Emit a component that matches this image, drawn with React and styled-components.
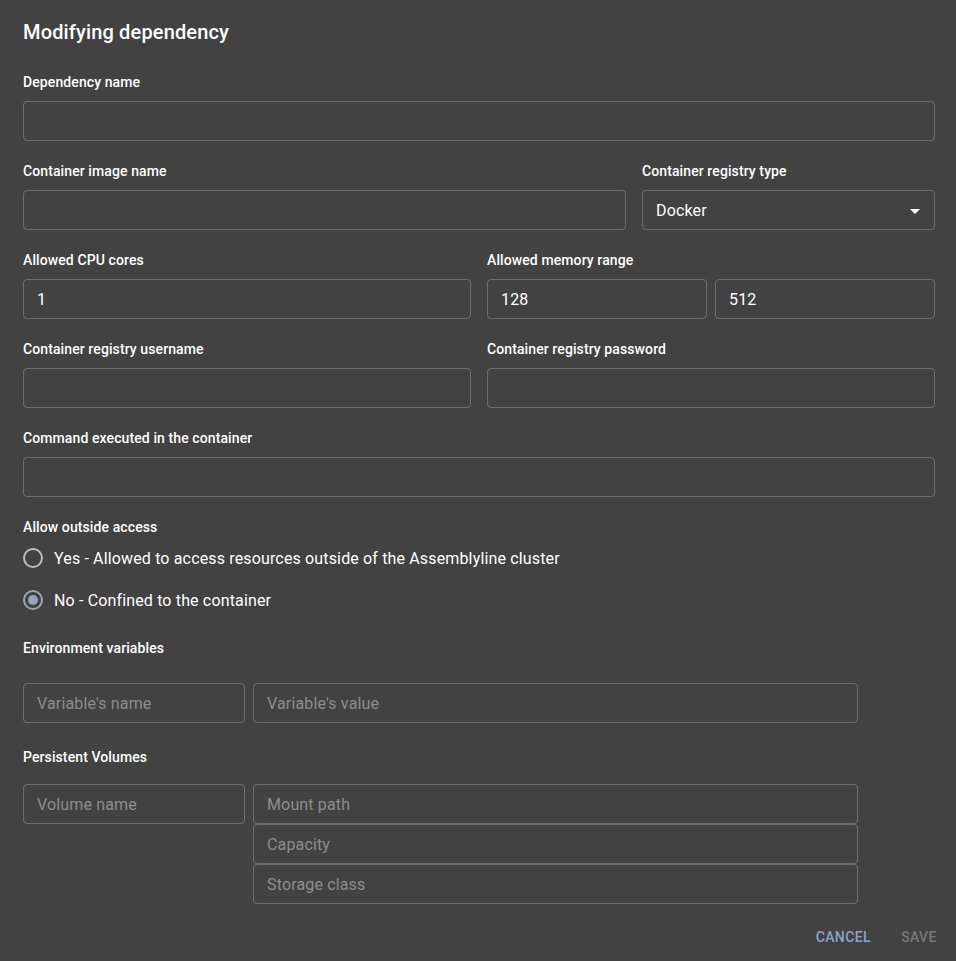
import React from "react";
import styled, { createGlobalStyle } from "styled-components";

const Global = createGlobalStyle`
  html, body { margin: 0; padding: 0; background: #424242; }
  body { font-family: Roboto, "Liberation Sans", Arial, sans-serif; color: #fff; }
  * { box-sizing: border-box; }
`;

const Page = styled.div`
  width: 956px;
  min-height: 961px;
  background: #424242;
  padding: 16px 21px 0 23px;
  display: flex;
  flex-direction: column;
`;

const Title = styled.h2`
  margin: 0;
  font-size: 20px;
  line-height: 32px;
  font-weight: 500;
  letter-spacing: 0.15px;
`;

const Section = styled.div`
  margin-top: ${(p) => p.$mt}px;
  display: flex;
  flex-direction: column;
`;

const Label = styled.div`
  font-size: 14px;
  line-height: 20px;
  font-weight: 500;
  letter-spacing: 0.1px;
  margin-bottom: ${(p) => p.$mb ?? 9}px;
  white-space: nowrap;
`;

const Grid = styled.div`
  display: grid;
  grid-template-columns: ${(p) => p.$cols};
  column-gap: 16px;
`;

const Pair = styled.div`
  display: flex;
  gap: 8px;
`;

const Field = styled.div`
  position: relative;
  height: 40px;
  flex: ${(p) => (p.$grow ? "1 1 0" : "none")};
  width: ${(p) => p.$w || "auto"};
  border: 1px solid rgba(255, 255, 255, 0.23);
  border-radius: 4px;
  display: flex;
  align-items: center;
  padding: 0 14px 0 13px;
  font-size: 16px;
  color: ${(p) => (p.$ph ? "#8d8d8d" : "#fff")};
  letter-spacing: 0.15px;
`;

const Arrow = styled.svg`
  position: absolute;
  right: 7px;
  top: 8px;
`;

const RadioRow = styled.div`
  height: 42px;
  display: flex;
  align-items: center;
  font-size: 16px;
  letter-spacing: 0.15px;
`;

const RadioIcon = styled.span`
  width: 20px;
  height: 20px;
  margin: 0 11px 0 0;
  border-radius: 50%;
  border: 2px solid ${(p) => (p.$checked ? "#9ba4b6" : "#bdbdbd")};
  display: flex;
  align-items: center;
  justify-content: center;
  &::after {
    content: "";
    display: ${(p) => (p.$checked ? "block" : "none")};
    width: 10px;
    height: 10px;
    border-radius: 50%;
    background: #9ba4b6;
  }
`;

const VolumeRow = styled.div`
  display: flex;
  gap: 8px;
  align-items: flex-start;
`;

const Stack = styled.div`
  display: flex;
  flex-direction: column;
  width: 605px;
`;

const Actions = styled.div`
  margin-top: 15px;
  margin-right: -16px;
  display: flex;
  justify-content: flex-end;
  gap: 8px;
`;

const Button = styled.button`
  background: none;
  border: none;
  height: 36px;
  min-width: 64px;
  padding: 6px 8px;
  font-family: Roboto, "Liberation Sans", Arial, sans-serif;
  font-size: 14px;
  font-weight: 500;
  letter-spacing: 0.4px;
  text-transform: uppercase;
  color: ${(p) => (p.disabled ? "rgba(255,255,255,0.3)" : "#8ea2c6")};
`;

const DropArrow = () => (
  <Arrow width="24" height="24" viewBox="0 0 24 24">
    <path d="M7 10l5 5 5-5z" fill="#fff" />
  </Arrow>
);

export default function App() {
  return (
    <>
      <Global />
      <Page>
        <Title>Modifying dependency</Title>

        <Section $mt={24}>
          <Label>Dependency name</Label>
          <Field />
        </Section>

        <Section $mt={20}>
          <Grid $cols="minmax(0, 603fr) minmax(0, 293fr)">
            <div>
              <Label>Container image name</Label>
              <Field />
            </div>
            <div>
              <Label>Container registry type</Label>
              <Field>
                Docker
                <DropArrow />
              </Field>
            </div>
          </Grid>
        </Section>

        <Section $mt={20}>
          <Grid $cols="minmax(0, 1fr) minmax(0, 1fr)">
            <div>
              <Label>Allowed CPU cores</Label>
              <Field>1</Field>
            </div>
            <div>
              <Label>Allowed memory range</Label>
              <Pair>
                <Field $grow>128</Field>
                <Field $grow>512</Field>
              </Pair>
            </div>
          </Grid>
        </Section>

        <Section $mt={20}>
          <Grid $cols="minmax(0, 1fr) minmax(0, 1fr)">
            <div>
              <Label>Container registry username</Label>
              <Field />
            </div>
            <div>
              <Label>Container registry password</Label>
              <Field />
            </div>
          </Grid>
        </Section>

        <Section $mt={20}>
          <Label>Command executed in the container</Label>
          <Field />
        </Section>

        <Section $mt={20}>
          <Label $mb={0}>Allow outside access</Label>
          <RadioRow>
            <RadioIcon />
            Yes - Allowed to access resources outside of the Assemblyline cluster
          </RadioRow>
          <RadioRow>
            <RadioIcon $checked />
            No - Confined to the container
          </RadioRow>
        </Section>

        <Section $mt={17}>
          <Label $mb={25}>Environment variables</Label>
          <Pair>
            <Field $w="222px" $ph>Variable's name</Field>
            <Field $w="605px" $ph>Variable's value</Field>
          </Pair>
        </Section>

        <Section $mt={24}>
          <Label $mb={17}>Persistent Volumes</Label>
          <VolumeRow>
            <Field $w="222px" $ph>Volume name</Field>
            <Stack>
              <Field $ph>Mount path</Field>
              <Field $ph>Capacity</Field>
              <Field $ph>Storage class</Field>
            </Stack>
          </VolumeRow>
        </Section>

        <Actions>
          <Button>Cancel</Button>
          <Button disabled>Save</Button>
        </Actions>
      </Page>
    </>
  );
}
